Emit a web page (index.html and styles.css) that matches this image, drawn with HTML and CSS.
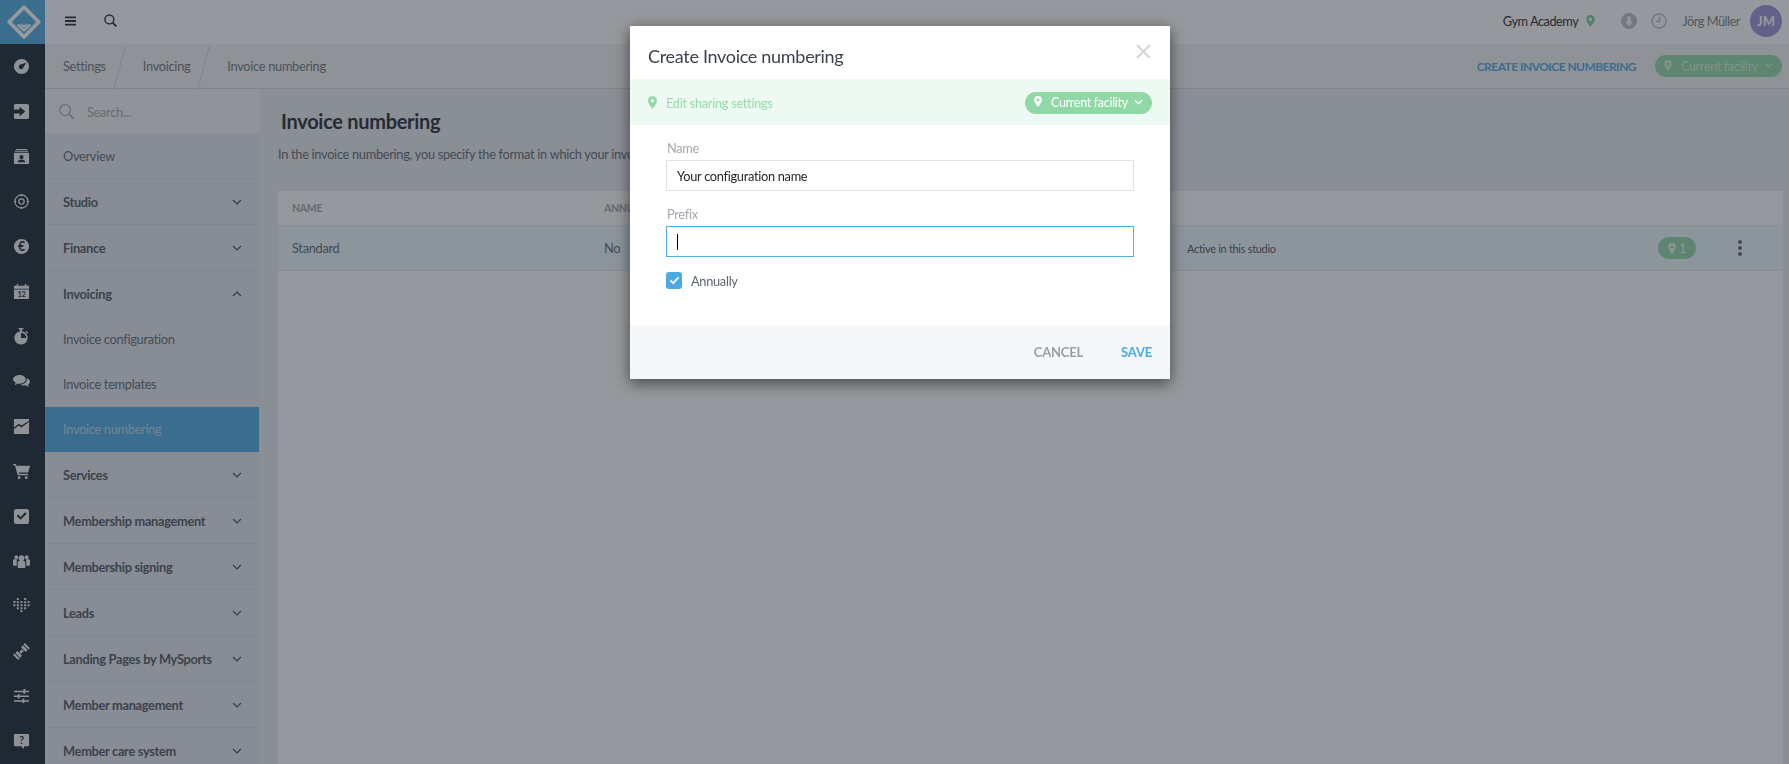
FILE: index.html
```html
<!DOCTYPE html>
<html>
<head>
<meta charset="utf-8" />
<title>Invoice numbering</title>
<link rel="stylesheet" href="styles.css">
</head>
<body>

<div class="app">

    <div class="rail">
        <div class="logo">
            <svg width="36" height="36" viewBox="0 0 34 34" fill="none" stroke="currentColor" stroke-width="3.600" stroke-linejoin="round"><path d="M17 3 31 17 17 31 3 17Z"/><path d="M11 19.500l6 5.500 6-5.500" stroke-width="2.200"/><path d="M14 19l3 2.500 3-2.500" stroke-width="1.600"/></svg>
        </div>
        <div class="rail-item"><svg viewBox="0 0 18 18"><path fill-rule="evenodd" d="M9 1a8 8 0 1 1 0 16A8 8 0 0 1 9 1Zm5 4L8 7a2.500 2.500 0 1 0 3 3Z"/></svg></div>
        <div class="rail-item"><svg viewBox="0 0 18 18"><path fill-rule="evenodd" d="M3 1h12a2 2 0 0 1 2 2v12a2 2 0 0 1-2 2H3a2 2 0 0 1-2-2v-4h6v3l6-5-6-5v3H1V3a2 2 0 0 1 2-2Z"/></svg></div>
        <div class="rail-item"><svg viewBox="0 0 18 18"><path fill-rule="evenodd" d="M3 1h12v1H3ZM2 3h14v1H2ZM2 5h14a1 1 0 0 1 1 1v10a1 1 0 0 1-1 1H2a1 1 0 0 1-1-1V6a1 1 0 0 1 1-1Zm7 2.500a2.200 2.200 0 1 0 0 4.400 2.200 2.200 0 0 0 0-4.400ZM5 15h8c0-2-2-2.500-4-2.500S5 13 5 15Z"/></svg></div>
        <div class="rail-item"><svg viewBox="0 0 18 18" fill="none" stroke="currentColor" stroke-width="1.300"><circle cx="9" cy="9" r="7"/><circle cx="9" cy="9" r="2.800"/><path d="M9 1v2.500M9 14.500V17M1 9h2.500M14.500 9H17"/></svg></div>
        <div class="rail-item"><svg viewBox="0 0 18 18"><circle cx="9" cy="9" r="8"/><text class="rail-glyph" x="9" y="13.500" text-anchor="middle">€</text></svg></div>
        <div class="rail-item"><svg viewBox="0 0 18 18"><path d="M1 3h3V1h1.500v2h7V1H14v2h3v3H1Zm0 4h16v10H1Z"/><text class="rail-date" x="9" y="15" text-anchor="middle">12</text></svg></div>
        <div class="rail-item"><svg viewBox="0 0 18 18"><path fill-rule="evenodd" d="M6 0h5v1.500H9.500v2a7 7 0 1 1-2 0v-2H6Zm2.500 5v5.500H14A5.500 5.500 0 0 0 8.500 5ZM14 3l2 2-1 1-2-2Z"/></svg></div>
        <div class="rail-item"><svg viewBox="0 0 18 18"><path d="M7 2c3.500 0 6.500 2 6.500 4.700S10.500 11.400 7 11.400c-.7 0-1.300-.1-2-.2L2 13l.8-3C1 9.200 0 8 0 6.700 0 4 3.500 2 7 2Z"/><path d="M14.500 5.500c2 .7 3.500 2 3.500 3.700 0 1.200-.8 2.200-2 2.900l.7 2.900-3-1.900c-2.300.4-4.400 0-5.700-1 3.500 0 7.200-2.500 6.500-6.600Z"/></svg></div>
        <div class="rail-item"><svg viewBox="0 0 18 18"><path fill-rule="evenodd" d="M1 1h16v16H1Zm0 11 5-4 3 2 8-6v-1l-8 5-3-2-5 4Z"/></svg></div>
        <div class="rail-item"><svg viewBox="0 0 18 18"><path d="M0 1h3l.7 2H18l-2 7H6l.4 1.500H16V13H5L2 2.500H0Z"/><circle cx="6.500" cy="15.500" r="1.500"/><circle cx="14" cy="15.500" r="1.500"/></svg></div>
        <div class="rail-item"><svg viewBox="0 0 18 18"><path fill-rule="evenodd" d="M4 1h10a3 3 0 0 1 3 3v10a3 3 0 0 1-3 3H4a3 3 0 0 1-3-3V4a3 3 0 0 1 3-3Zm9 3.500-5 5L5.500 7 4 8.500l4 4L14.500 6Z"/></svg></div>
        <div class="rail-item"><svg viewBox="0 0 18 18"><circle cx="9" cy="5.500" r="3"/><circle cx="3.500" cy="4.500" r="2"/><circle cx="14.500" cy="4.500" r="2"/><path d="M5 10a2 2 0 0 1 2-1.500h4A2 2 0 0 1 13 10v6H5ZM0 8c0-1 1-1.500 2-1.500h2.500L4 8v5.500H1a1 1 0 0 1-1-1ZM18 8c0-1-1-1.500-2-1.500h-2.500L14 8v5.500h3a1 1 0 0 0 1-1Z"/></svg></div>
        <div class="rail-item"><svg viewBox="0 0 18 18" fill="none" stroke="currentColor" stroke-width="2.100" stroke-dasharray="2.100 1.150"><path d="M1.500 3.300v6.400M5.100 .1v12.800M9 3.300v12.800M12.900 .1v12.800M16.500 3.300v6.400"/></svg></div>
        <div class="rail-item"><svg viewBox="0 0 18 18"><path d="m12.500 0 5.500 5.500-1.500 1.500L11 1.500ZM1.500 11 7 16.500 5.500 18 0 12.500Z"/><path d="m10.500 2.500 5 5-2 2-5-5ZM4.500 8.500l5 5-2 2-5-5Z"/><path d="M6.500 9.500 9.500 6.500l2 2-3 3Z"/></svg></div>
        <div class="rail-item"><svg viewBox="0 0 18 18"><path d="M1 3h10V1h2v2h4v1.500h-4V6h-2V4.500H1Zm0 5h4V6.500h2V8h10v1.500H7V11H5V9.500H1Zm0 5h9v-1.500h2V13h5v1.500h-5V16h-2v-1.500H1Z"/></svg></div>
        <div class="rail-item"><svg viewBox="0 0 18 18"><path d="M2 1h14a1 1 0 0 1 1 1v11a1 1 0 0 1-1 1h-4l-1 3-2-3H2a1 1 0 0 1-1-1V2a1 1 0 0 1 1-1Z"/><text class="rail-help" x="9" y="11.500" text-anchor="middle">?</text></svg></div>
    </div>

    <div class="main">

        <div class="topbar">
            <div class="topbar-left">
                <svg class="burger" viewBox="0 0 12 10"><path d="M0 0h12v2H0Zm0 4h12v2H0Zm0 4h12v2H0Z"/></svg>
                <svg class="top-search" viewBox="0 0 14 14" fill="none" stroke="currentColor" stroke-width="1.500"><circle cx="5.800" cy="5.800" r="4.800"/><path d="m9.300 9.300 4 4" stroke-width="2"/></svg>
            </div>
            <div class="topbar-right">
                <span class="studio">Gym Academy</span>
                <svg class="pin pin-green" viewBox="0 0 10 14"><path fill-rule="evenodd" d="M5 0a5 5 0 0 1 5 5c0 3-5 9-5 9S0 8 0 5a5 5 0 0 1 5-5Zm0 3a2 2 0 1 0 0 4 2 2 0 0 0 0-4Z"/></svg>
                <svg class="round-icon down" viewBox="0 0 16 16"><path fill-rule="evenodd" d="M8 0a8 8 0 1 1 0 16A8 8 0 0 1 8 0ZM6.500 3.500v5H4L8 13l4-4.500H9.500v-5Z"/></svg>
                <svg class="round-icon clock" viewBox="0 0 16 16" fill="none" stroke="currentColor" stroke-width="1.500"><circle cx="8" cy="8" r="7"/><path d="M8.500 4v4.500H5"/></svg>
                <span class="user">Jörg Müller</span>
                <span class="avatar">JM</span>
            </div>
        </div>

        <div class="crumbbar">
            <div class="crumbs">
                <span class="crumb">Settings</span>
                <span class="crumb">Invoicing</span>
                <span class="crumb crumb-last">Invoice numbering</span>
            </div>
            <div class="crumb-actions">
                <span class="create-link">CREATE INVOICE NUMBERING</span>
                <span class="pill pill-dim">
                    <svg class="pin" viewBox="0 0 10 14"><path fill-rule="evenodd" d="M5 0a5 5 0 0 1 5 5c0 3-5 9-5 9S0 8 0 5a5 5 0 0 1 5-5Zm0 3.300a1.700 1.700 0 1 0 0 3.400 1.700 1.700 0 0 0 0-3.400Z"/></svg>
                    Current facility
                    <svg class="pill-caret" viewBox="0 0 10 6" fill="none" stroke="currentColor" stroke-width="1.400"><path d="m1 1 4 4 4-4"/></svg>
                </span>
            </div>
        </div>

        <div class="body">
            <div class="sidebar">
                <div class="side-search">
                    <svg viewBox="0 0 16 16" fill="none" stroke="currentColor" stroke-width="1.300"><circle cx="6.500" cy="6.500" r="5.800"/><path d="m10.800 10.800 5 5" stroke-width="1.800"/></svg>
                    <span>Search...</span>
                </div>
                <div class="side-item side-plain">Overview</div>
                <div class="side-item">Studio <svg class="chev" viewBox="0 0 10 6"><path d="m1 1 4 4 4-4"/></svg></div>
                <div class="side-item">Finance <svg class="chev" viewBox="0 0 10 6"><path d="m1 1 4 4 4-4"/></svg></div>
                <div class="side-item side-open">Invoicing <svg class="chev" viewBox="0 0 10 6"><path d="m1 5 4-4 4 4"/></svg></div>
                <div class="side-sub">Invoice configuration</div>
                <div class="side-sub">Invoice templates</div>
                <div class="side-sub side-active">Invoice numbering</div>
                <div class="side-item">Services <svg class="chev" viewBox="0 0 10 6"><path d="m1 1 4 4 4-4"/></svg></div>
                <div class="side-item">Membership management <svg class="chev" viewBox="0 0 10 6"><path d="m1 1 4 4 4-4"/></svg></div>
                <div class="side-item">Membership signing <svg class="chev" viewBox="0 0 10 6"><path d="m1 1 4 4 4-4"/></svg></div>
                <div class="side-item">Leads <svg class="chev" viewBox="0 0 10 6"><path d="m1 1 4 4 4-4"/></svg></div>
                <div class="side-item">Landing Pages by MySports <svg class="chev" viewBox="0 0 10 6"><path d="m1 1 4 4 4-4"/></svg></div>
                <div class="side-item">Member management <svg class="chev" viewBox="0 0 10 6"><path d="m1 1 4 4 4-4"/></svg></div>
                <div class="side-item">Member care system <svg class="chev" viewBox="0 0 10 6"><path d="m1 1 4 4 4-4"/></svg></div>
            </div>

            <div class="content">
                <h1>Invoice numbering</h1>
                <p class="intro">In the invoice numbering, you specify the format in which your invoice numbers are created.</p>
                <div class="panel">
                    <div class="table-head">
                        <span class="col-name">NAME</span>
                        <span class="col-annual">ANNUALLY</span>
                    </div>
                    <div class="table-row">
                        <span class="col-name">Standard</span>
                        <span class="col-annual">No</span>
                        <span class="col-status">Active in this studio</span>
                        <span class="count-pill">
                            <svg class="pin" viewBox="0 0 10 14"><path fill-rule="evenodd" d="M5 0a5 5 0 0 1 5 5c0 3-5 9-5 9S0 8 0 5a5 5 0 0 1 5-5Zm0 3.300a1.700 1.700 0 1 0 0 3.400 1.700 1.700 0 0 0 0-3.400Z"/></svg>
                            1
                        </span>
                        <span class="dots"><i></i><i></i><i></i></span>
                    </div>
                </div>
            </div>
        </div>
    </div>
</div>

<div class="overlay"></div>

<div class="modal">
    <div class="modal-head">
        <span class="modal-title">Create Invoice numbering</span>
        <svg class="modal-close" viewBox="0 0 15 15" fill="none" stroke="currentColor" stroke-width="1.800"><path d="m1 1 13 13M14 1 1 14"/></svg>
    </div>
    <div class="share-band">
        <span class="share-label">
            <svg class="share-pin" viewBox="0 0 10 14"><path fill-rule="evenodd" d="M5 0a5 5 0 0 1 5 5c0 3-5 9-5 9S0 8 0 5a5 5 0 0 1 5-5Zm0 3a2 2 0 1 0 0 4 2 2 0 0 0 0-4Z"/></svg>
            Edit sharing settings
        </span>
        <span class="pill">
            <svg class="pin" viewBox="0 0 10 14"><path fill-rule="evenodd" d="M5 0a5 5 0 0 1 5 5c0 3-5 9-5 9S0 8 0 5a5 5 0 0 1 5-5Zm0 3.300a1.700 1.700 0 1 0 0 3.400 1.700 1.700 0 0 0 0-3.400Z"/></svg>
            Current facility
            <svg class="pill-caret" viewBox="0 0 10 6" fill="none" stroke="currentColor" stroke-width="1.400"><path d="m1 1 4 4 4-4"/></svg>
        </span>
    </div>
    <div class="modal-form">
        <label class="field-label">Name</label>
        <div class="field">Your configuration name</div>
        <label class="field-label">Prefix</label>
        <div class="field field-focus"><span class="caret"></span></div>
        <div class="check-row">
            <span class="checkbox">
                <svg viewBox="0 0 12 10" fill="none" stroke="#fff" stroke-width="2"><path d="m1.500 5 3 3 6-6.500"/></svg>
            </span>
            Annually
        </div>
    </div>
    <div class="modal-foot">
        <span class="btn-cancel">CANCEL</span>
        <span class="btn-save">SAVE</span>
    </div>
</div>

</body>
</html>
```

FILE: styles.css
```css
html, body {
    margin: 0;
    height: 100%;
    overflow: hidden;
}

body {
    font-family: Lato, "Noto Sans", sans-serif;
    font-size: 12.800px;
    letter-spacing: -0.3px;
    color: #5b6470;
    background: #e9ebf1;
}

.app {
    display: flex;
    height: 100%;
}

/* left icon rail */
.rail {
    flex: 0 0 45px;
    background: #13202e;
    color: #f0f2f4;
}

.logo {
    height: 44px;
    display: flex;
    align-items: center;
    justify-content: center;
    padding-left: 3px;
    box-sizing: border-box;
    background: #4ba9e3;
    color: #fff;
}

.rail-item {
    height: 45px;
    display: flex;
    align-items: center;
    justify-content: center;
    padding-right: 3px;
    color: #f0f2f4;
}

.rail-item svg {
    width: 17px;
    height: 17px;
    fill: currentColor;
}

.rail-item svg[fill="none"] {
    fill: none;
}

.rail-glyph {
    font-size: 13px;
    font-weight: 700;
    fill: #13202e;
}

.rail-date {
    font-size: 8px;
    font-weight: 700;
    fill: #13202e;
}

.rail-help {
    font-size: 11px;
    font-weight: 700;
    fill: #13202e;
}

.main {
    flex: 1;
    min-width: 0;
    display: flex;
    flex-direction: column;
}

/* top bar */
.topbar {
    height: 44px;
    box-sizing: border-box;
    padding-bottom: 3px;
    flex: none;
    display: flex;
    align-items: center;
    justify-content: space-between;
    background: #fff;
}

.topbar-left {
    display: flex;
    align-items: center;
    padding-left: 20px;
    gap: 28px;
}

.burger {
    width: 11px;
    height: 10px;
    fill: #1d2530;
}

.top-search {
    width: 13px;
    height: 13px;
    color: #1d2530;
}

.topbar-right {
    display: flex;
    align-items: center;
    padding-right: 7px;
}

.studio {
    color: #1d2530;
    letter-spacing: -0.5px;
}

.pin {
    width: 8px;
    height: 11px;
    fill: currentColor;
}

.pin-green {
    margin-left: 8px;
    width: 9px;
    height: 12px;
    color: #7ad09a;
}

.round-icon {
    width: 16px;
    height: 16px;
    color: #bcc0c6;
    fill: currentColor;
}

.round-icon.down {
    margin-left: 26px;
}

.round-icon.clock {
    margin-left: 14px;
    fill: none;
}

.user {
    margin-left: 15px;
    color: #7a808a;
    letter-spacing: -0.5px;
}

.avatar {
    margin-left: 10px;
    width: 32px;
    height: 32px;
    border-radius: 50%;
    background: #9c8fdb;
    color: #fff;
    font-size: 13px;
    font-weight: 700;
    letter-spacing: 0;
    display: flex;
    align-items: center;
    justify-content: center;
}

/* breadcrumb bar */
.crumbbar {
    height: 45px;
    box-sizing: border-box;
    flex: none;
    display: flex;
    align-items: center;
    justify-content: space-between;
    background: #f3f3f5;
    border-bottom: 1px solid #d4d6da;
}

.crumbs {
    display: flex;
    align-items: center;
    height: 100%;
}

.crumb {
    position: relative;
    padding: 0 0 0 18px;
    margin-right: 19px;
    color: #6b7380;
}

.crumb::after {
    content: "";
    position: absolute;
    right: -14px;
    top: -13px;
    height: 46px;
    border-right: 1px solid #d4d6da;
    transform: rotate(15deg);
}

.crumb + .crumb {
    padding-left: 18px;
}

.crumb-last::after {
    display: none;
}

.crumb-actions {
    display: flex;
    align-items: center;
    padding-right: 7px;
    gap: 19px;
}

.create-link {
    color: #4ba9e3;
    font-size: 12px;
    font-weight: 700;
    letter-spacing: -0.55px;
}

.pill {
    width: 127px;
    height: 22px;
    box-sizing: border-box;
    border-radius: 11px;
    background: #90d8a5;
    color: #fff;
    display: flex;
    align-items: center;
    padding-left: 9px;
    font-size: 12.500px;
    white-space: nowrap;
}

.pill .pin {
    margin-right: 9px;
    margin-top: -2px;
}

.pill-caret {
    width: 9px;
    height: 6px;
    margin-left: 6px;
    margin-top: -2px;
}

.pill-dim {
    color: #d7f0df;
}

/* body */
.body {
    flex: 1;
    min-height: 0;
    display: flex;
}

.sidebar {
    flex: 0 0 215px;
    background: #e5e7ef;
    overflow: hidden;
}

.side-search {
    height: 44px;
    box-sizing: border-box;
    padding: 1px 0 0 14px;
    display: flex;
    align-items: center;
    gap: 13px;
    background: #f5f5f7;
    color: #a4a8ae;
}

.side-search svg {
    width: 15px;
    height: 15px;
}

.side-item,
.side-sub {
    height: 46px;
    box-sizing: border-box;
    display: flex;
    align-items: center;
    justify-content: space-between;
    padding: 0 18px;
    border-bottom: 1px solid #d9dce5;
    font-weight: 700;
    color: #4b5360;
}

.side-plain {
    font-weight: 400;
    color: #5b6470;
}

.side-open {
    border-bottom: none;
}

.side-sub {
    height: 45px;
    padding-bottom: 2px;
    border-bottom: none;
    font-weight: 400;
    color: #5b6470;
}

.side-active {
    background: #4ba9e3;
    color: #b8dcf2;
    margin-right: 1px;
}

.chev {
    width: 10px;
    height: 6px;
    fill: none;
    stroke: #3f4753;
    stroke-width: 1.200;
}

/* content */
.content {
    flex: 1;
    min-width: 0;
    padding: 0 6px 0 18px;
    display: flex;
    flex-direction: column;
}

.content h1 {
    margin: 18px 0 0 3px;
    font-size: 20px;
    line-height: 28px;
    font-weight: 700;
    color: #1d2530;
}

.intro {
    margin: 9px 0 0;
    line-height: 20px;
    color: #5b6470;
    white-space: nowrap;
}

.panel {
    margin-top: 27px;
    flex: 1;
    background: #fff;
}

.table-head,
.table-row {
    display: flex;
    align-items: center;
    position: relative;
}

.table-head {
    height: 35px;
    box-sizing: border-box;
    font-size: 10.500px;
    font-weight: 700;
    color: #a0a5ac;
    border-bottom: 1px solid #eceef1;
}

.table-row {
    height: 45px;
    box-sizing: border-box;
    background: #edf9fd;
    border-bottom: 1px solid #e4eaec;
}

.col-name {
    flex: 0 0 326px;
    padding-left: 14px;
    box-sizing: border-box;
}

.col-annual {
    flex: 0 0 583px;
}

.col-status {
    font-size: 11px;
    flex: 0 0 471px;
    color: #4a525e;
}

.count-pill {
    width: 38px;
    height: 22px;
    border-radius: 11px;
    background: #90d8a5;
    color: #eef9f2;
    display: flex;
    align-items: center;
    justify-content: center;
    gap: 3px;
    font-size: 12.500px;
}

.dots {
    margin-left: 42px;
    display: flex;
    flex-direction: column;
    gap: 2px;
}

.dots i {
    width: 4px;
    height: 4px;
    border-radius: 50%;
    background: #5b6470;
}

/* dimming layer and dialog */
.overlay {
    position: fixed;
    inset: 0;
    background: rgba(43, 49, 57, 0.5);
}

.modal {
    position: fixed;
    left: 630px;
    top: 26px;
    width: 540px;
    height: 353px;
    display: flex;
    flex-direction: column;
    background: #fff;
    box-shadow: 0 4px 14px rgba(0, 0, 0, 0.55);
}

.modal-head {
    height: 53px;
    box-sizing: border-box;
    padding: 7px 19px 0 18px;
    flex: none;
    display: flex;
    align-items: center;
    justify-content: space-between;
}

.modal-title {
    font-size: 18px;
    color: #3a424d;
}

.modal-close {
    width: 15px;
    height: 15px;
    color: #d0d3d7;
    margin-top: -10px;
}

.share-band {
    height: 46px;
    box-sizing: border-box;
    padding: 1px 18px 0;
    flex: none;
    display: flex;
    align-items: center;
    justify-content: space-between;
    background: #eff9f3;
}

.share-label {
    display: flex;
    align-items: center;
    gap: 9px;
    color: #95dcaa;
}

.share-pin {
    width: 9px;
    height: 13px;
    fill: #90d8a5;
}

.modal-form {
    flex: 1;
    padding: 15px 36px 0;
}

.field-label {
    display: block;
    margin-left: 1px;
    line-height: 17px;
    color: #a3a7ad;
}

.field {
    height: 31px;
    margin: 3px 0 0;
    padding-left: 10px;
    box-sizing: border-box;
    display: flex;
    align-items: center;
    border: 1px solid #dfe2e6;
    color: #22262c;
}

.field + .field-label {
    margin-top: 15px;
}

.field-focus {
    border-color: #4fb0e3;
}

.caret {
    width: 1px;
    height: 16px;
    background: #000;
}

.check-row {
    display: flex;
    align-items: center;
    gap: 9px;
    margin-top: 15px;
    color: #5b6470;
}

.checkbox {
    width: 16px;
    height: 17px;
    border-radius: 3px;
    background: #4ba9e3;
    display: flex;
    align-items: center;
    justify-content: center;
}

.checkbox svg {
    width: 11px;
    height: 9px;
}

.modal-foot {
    height: 54px;
    flex: none;
    display: flex;
    align-items: center;
    justify-content: flex-end;
    gap: 38px;
    padding: 0 18px;
    background: #f6f7f9;
    font-size: 13px;
    font-weight: 700;
    letter-spacing: -0.2px;
}

.btn-cancel {
    color: #9a9ea4;
}

.btn-save {
    color: #4ba9e3;
}
```
